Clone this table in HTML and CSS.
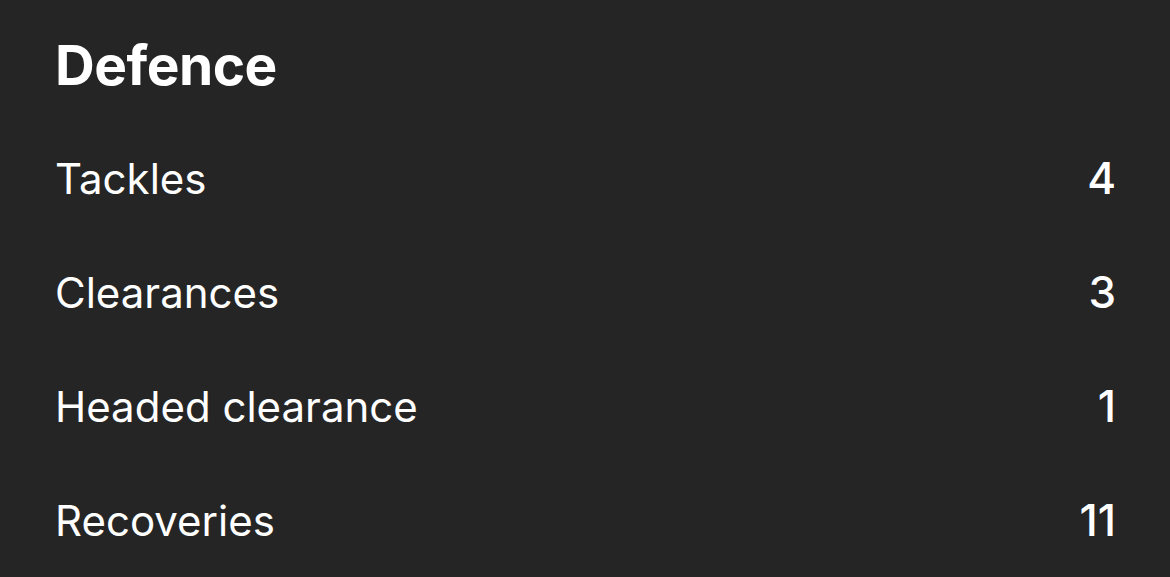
FILE: index.html
```html
<!DOCTYPE html>
<html>
<head>
<meta charset="utf-8">
<link rel="stylesheet" href="styles.css">
</head>
<body>
<div class="card">
  <h1 class="title">Defence</h1>
  <div class="stats">
    <div class="row"><span class="label">Tackles</span><span class="value">4</span></div>
    <div class="row"><span class="label">Clearances</span><span class="value">3</span></div>
    <div class="row"><span class="label">Headed clearance</span><span class="value">1</span></div>
    <div class="row"><span class="label">Recoveries</span><span class="value">11</span></div>
  </div>
</div>
</body>
</html>
```
FILE: styles.css
```css
html, body {
  margin: 0;
  padding: 0;
  background: #252525;
}
body {
  width: 1170px;
  height: 577px;
  overflow: hidden;
  font-family: Inter, "Noto Sans", sans-serif;
  color: #ffffff;
}
.card {
  padding: 35px 54px 0 55px;
}
.title {
  margin: 0;
  font-size: 55px;
  font-weight: 700;
  line-height: 60px;
  letter-spacing: -0.5px;
}
.stats {
  display: flex;
  flex-direction: column;
  gap: 62px;
  margin-top: 57px;
}
.row {
  display: flex;
  justify-content: space-between;
  align-items: baseline;
  height: 52px;
  line-height: 52px;
}
.label {
  font-size: 42px;
  font-weight: 400;
}
.value {
  font-size: 44px;
  font-weight: 500;
}
```
